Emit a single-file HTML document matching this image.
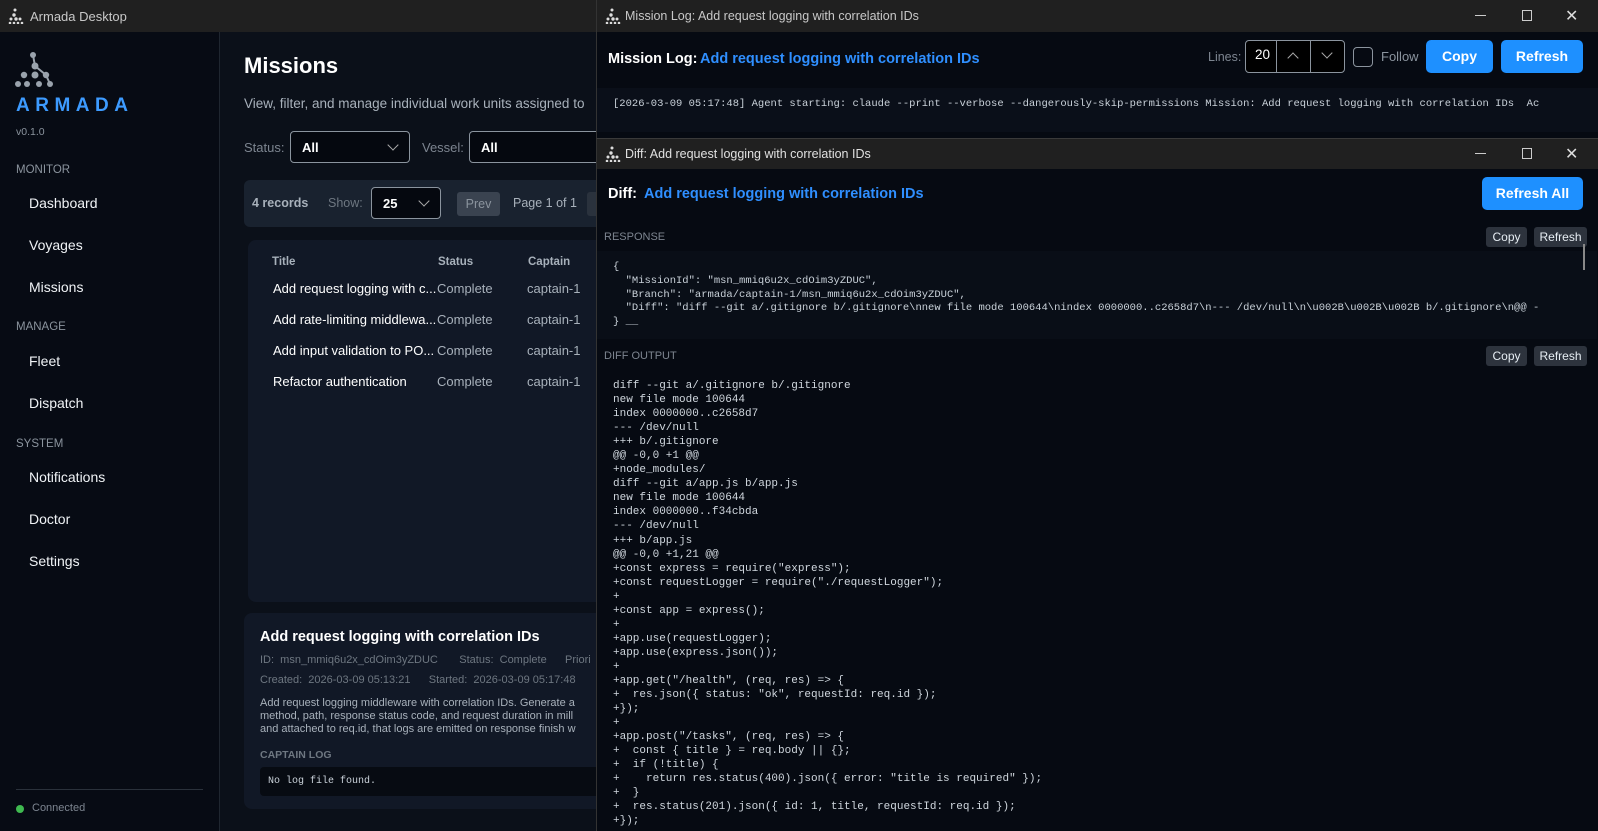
<!DOCTYPE html>
<html><head><meta charset="utf-8"><style>
*{box-sizing:border-box;margin:0;padding:0}
body{width:1598px;height:831px;overflow:hidden;background:#0b1019;font-family:"Liberation Sans",sans-serif;position:relative;color:#e6edf3}
.a{position:absolute;white-space:nowrap}
pre.a{white-space:pre}
.mono{font-family:"Liberation Mono",monospace}
.tb{position:absolute;background:#202020;height:32px;color:#c8c8c8;font-size:13px}
.sel{position:absolute;border:1px solid #8b949e;border-radius:4px;background:#05080f;color:#fff;font-size:13px;font-weight:bold}
.chev{position:absolute;width:8px;height:8px;border-right:1.3px solid #aaa;border-bottom:1.3px solid #aaa;transform:rotate(45deg)}
.nav{position:absolute;left:29px;font-size:14px;color:#f0f3f6}
.sec{position:absolute;left:16px;font-size:11.5px;color:#8b949e}
.btn{position:absolute;background:#1e90ff;color:#fff;font-weight:bold;font-size:14px;border-radius:5px;text-align:center}
.sb{position:absolute;background:#2d333d;color:#e6edf3;font-size:12px;border-radius:3px;text-align:center;line-height:20px}
.wc{position:absolute;color:#ddd;font-size:14px}
.c{position:absolute;font-size:13px;color:#a8b1bb}
</style></head><body>
<div class="tb" style="left:0;top:0;width:600px">
<svg class="a" style="left:8px;top:8px" width="16" height="16" viewBox="0 0 16 16" fill="#ddd"><circle cx="7" cy="2" r="1.5"/><circle cx="6" cy="7" r="1.7"/><circle cx="3" cy="11" r="1.5"/><circle cx="8" cy="11" r="1.7"/><circle cx="12" cy="11" r="1.5"/><circle cx="2" cy="15" r="1.3"/><circle cx="6" cy="15" r="1.3"/><circle cx="10" cy="15" r="1.3"/><circle cx="14" cy="15" r="1.3"/></svg>
<div class="a" style="left:30px;top:9px">Armada Desktop</div></div>
<div class="a" style="left:0;top:32px;width:220px;height:799px;background:#070b14;border-right:1px solid #1f2630"></div>
<svg class="a" style="left:15px;top:52px" width="38" height="36" viewBox="0 0 38 36" fill="#9aa3ad"><circle cx="18" cy="3" r="3"/><circle cx="20" cy="14" r="3.5"/><circle cx="9" cy="23" r="3.2"/><circle cx="20" cy="23" r="3.5"/><circle cx="31" cy="23" r="3.2"/><circle cx="3" cy="32" r="3"/><circle cx="12" cy="32" r="3"/><circle cx="24" cy="32" r="3"/><circle cx="35" cy="32" r="3"/><path d="M18 3 L20 14 M20 14 L31 23 L35 32" stroke="#9aa3ad" stroke-width="2" fill="none"/></svg>
<div class="a" style="left:16px;top:95px;font-size:19px;font-weight:bold;color:#3d9bff;letter-spacing:5.5px">ARMADA</div>
<div class="a" style="left:16px;top:126px;font-size:10.5px;color:#8b949e">v0.1.0</div>
<div class="sec" style="top:164px">MONITOR</div>
<div class="nav" style="top:195px">Dashboard</div>
<div class="nav" style="top:237px">Voyages</div>
<div class="nav" style="top:279px">Missions</div>
<div class="sec" style="top:321px">MANAGE</div>
<div class="nav" style="top:353px">Fleet</div>
<div class="nav" style="top:395px">Dispatch</div>
<div class="sec" style="top:438px">SYSTEM</div>
<div class="nav" style="top:469px">Notifications</div>
<div class="nav" style="top:511px">Doctor</div>
<div class="nav" style="top:553px">Settings</div>
<div class="a" style="left:16px;top:789px;width:187px;height:1px;background:#2a313b"></div>
<div class="a" style="left:16px;top:805px;width:8px;height:8px;border-radius:50%;background:#3fb950"></div>
<div class="a" style="left:32px;top:802px;font-size:11px;color:#7d8590">Connected</div>
<div class="a" style="left:244px;top:53px;font-size:22px;font-weight:bold;color:#fff">Missions</div>
<div class="a" style="left:244px;top:96px;font-size:13.5px;color:#a8b1bb">View, filter, and manage individual work units assigned to</div>
<div class="a" style="left:244px;top:140px;font-size:13px;color:#7d8590">Status:</div>
<div class="sel" style="left:290px;top:131px;width:120px;height:32px"><span class="a" style="left:11px;top:8px">All</span><div class="chev" style="left:98px;top:9px"></div></div>
<div class="a" style="left:422px;top:140px;font-size:13px;color:#7d8590">Vessel:</div>
<div class="sel" style="left:469px;top:131px;width:140px;height:32px"><span class="a" style="left:11px;top:8px">All</span></div>
<div class="a" style="left:244px;top:180px;width:360px;height:47px;background:#19222f;border-radius:6px"></div>
<div class="a" style="left:252px;top:196px;font-size:12.5px;font-weight:bold;color:#a8b1bb">4 records</div>
<div class="a" style="left:328px;top:196px;font-size:12.5px;color:#6e7781">Show:</div>
<div class="sel" style="left:371px;top:187px;width:70px;height:32px"><span class="a" style="left:11px;top:8px">25</span><div class="chev" style="left:48px;top:9px"></div></div>
<div class="a" style="left:457px;top:192px;width:43px;height:24px;background:#3a4350;border-radius:3px;color:#8b949e;font-size:12.5px;text-align:center;line-height:24px">Prev</div>
<div class="a" style="left:513px;top:196px;font-size:12.5px;color:#a8b1bb">Page 1 of 1</div>
<div class="a" style="left:587px;top:192px;width:20px;height:24px;background:#2a323d;border-radius:3px"></div>
<div class="a" style="left:248px;top:240px;width:360px;height:362px;background:#111826;border-radius:8px"></div>
<div class="a" style="left:272px;top:256px;font-size:11.5px;font-weight:bold;color:#a8b1bb">Title</div>
<div class="a" style="left:438px;top:256px;font-size:11.5px;font-weight:bold;color:#a8b1bb">Status</div>
<div class="a" style="left:528px;top:256px;font-size:11.5px;font-weight:bold;color:#a8b1bb">Captain</div>
<div class="a" style="left:273px;top:281px;font-size:13px;color:#fff">Add request logging with c...</div>
<div class="a" style="left:273px;top:312px;font-size:13px;color:#fff">Add rate-limiting middlewa...</div>
<div class="a" style="left:273px;top:343px;font-size:13px;color:#fff">Add input validation to PO...</div>
<div class="a" style="left:273px;top:374px;font-size:13px;color:#fff">Refactor authentication</div>
<div class="c" style="left:437px;top:281px">Complete</div><div class="c" style="left:437px;top:312px">Complete</div><div class="c" style="left:437px;top:343px">Complete</div><div class="c" style="left:437px;top:374px">Complete</div>
<div class="c" style="left:527px;top:281px">captain-1</div><div class="c" style="left:527px;top:312px">captain-1</div><div class="c" style="left:527px;top:343px">captain-1</div><div class="c" style="left:527px;top:374px">captain-1</div>
<div class="a" style="left:244px;top:613px;width:360px;height:196px;background:#111826;border-radius:8px"></div>
<div class="a" style="left:260px;top:629px;font-size:14.5px;font-weight:bold;color:#fff">Add request logging with correlation IDs</div>
<div class="a" style="left:260px;top:654px;font-size:11px;color:#6e7781">ID:&nbsp; msn_mmiq6u2x_cdOim3yZDUC&nbsp;&nbsp;&nbsp;&nbsp;&nbsp;&nbsp; Status:&nbsp; Complete&nbsp;&nbsp;&nbsp;&nbsp;&nbsp; Priori</div>
<div class="a" style="left:260px;top:674px;font-size:11px;color:#6e7781">Created:&nbsp; 2026-03-09 05:13:21&nbsp;&nbsp;&nbsp;&nbsp;&nbsp; Started:&nbsp; 2026-03-09 05:17:48</div>
<div class="a" style="left:260px;top:697px;font-size:11px;color:#a8b1bb;line-height:13px">Add request logging middleware with correlation IDs. Generate a<br>method, path, response status code, and request duration in mill<br>and attached to req.id, that logs are emitted on response finish w</div>
<div class="a" style="left:260px;top:749px;font-size:10.5px;font-weight:bold;color:#6e7781">CAPTAIN LOG</div>
<div class="a mono" style="left:260px;top:767px;width:344px;height:29px;background:#070b12;border-radius:4px;font-size:10px;color:#c9d1d9;padding:9px 0 0 8px">No log file found.</div>
<div class="a" style="left:596px;top:0;width:1002px;height:140px;background:#060a12;border-left:1px solid #333;overflow:hidden">
<div class="a" style="left:0;top:88px;width:1002px;height:44px;background:#0a0f19"></div>
<div class="a mono" style="left:16px;top:98px;font-size:10.5px;color:#c9d1d9">[2026-03-09 05:17:48] Agent starting: claude --print --verbose --dangerously-skip-permissions Mission: Add request logging with correlation IDs&nbsp; Ac</div>
</div>
<div class="tb" style="left:597px;top:0;width:1001px">
<svg class="a" style="left:8px;top:8px" width="16" height="16" viewBox="0 0 16 16" fill="#ddd"><circle cx="7" cy="2" r="1.5"/><circle cx="6" cy="7" r="1.7"/><circle cx="3" cy="11" r="1.5"/><circle cx="8" cy="11" r="1.7"/><circle cx="12" cy="11" r="1.5"/><circle cx="2" cy="15" r="1.3"/><circle cx="6" cy="15" r="1.3"/><circle cx="10" cy="15" r="1.3"/><circle cx="14" cy="15" r="1.3"/></svg>
<div class="a" style="left:28px;top:9px;font-size:12.5px">Mission Log: Add request logging with correlation IDs</div>
<div class="a" style="left:878px;top:15px;width:11px;height:1px;background:#ccc"></div>
<div class="a" style="left:925px;top:10px;width:10px;height:11px;border:1px solid #ccc"></div>
<div class="wc" style="left:968px;top:6px;font-size:16px">✕</div></div>
<div class="a" style="left:608px;top:51px;font-size:14.5px;font-weight:bold;color:#fff">Mission Log:</div>
<div class="a" style="left:700px;top:51px;font-size:14.5px;font-weight:bold;color:#2f8fff">Add request logging with correlation IDs</div>
<div class="a" style="left:1208px;top:50px;font-size:12.5px;color:#7d8590">Lines:</div>
<div class="a" style="left:1245px;top:40px;width:100px;height:33px;border:1px solid #8b949e;border-radius:4px;background:#000"></div>
<div class="a" style="left:1276px;top:41px;width:1px;height:31px;background:#8b949e"></div>
<div class="a" style="left:1310px;top:41px;width:1px;height:31px;background:#8b949e"></div>
<div class="a" style="left:1255px;top:47px;font-size:13.5px;color:#fff">20</div>
<div class="chev" style="left:1289px;top:54px;transform:rotate(-135deg)"></div>
<div class="chev" style="left:1323px;top:49px"></div>
<div class="a" style="left:1353px;top:47px;width:20px;height:20px;border:1px solid #8b949e;border-radius:4px"></div>
<div class="a" style="left:1381px;top:49px;font-size:13px;color:#8b949e">Follow</div>
<div class="btn" style="left:1426px;top:40px;width:67px;height:33px;line-height:33px">Copy</div>
<div class="btn" style="left:1501px;top:40px;width:82px;height:33px;line-height:33px">Refresh</div>
<div class="a" style="left:596px;top:138px;width:1002px;height:693px;background:#060a12;border-left:1px solid #333;border-top:1px solid #3a3a3a;overflow:hidden">
<div class="a" style="left:0;top:112px;width:1000px;height:88px;background:#090e17"></div>
<pre class="a mono" style="left:16px;top:122px;font-size:10.5px;line-height:13.8px;color:#c9d1d9">{
  "MissionId": "msn_mmiq6u2x_cdOim3yZDUC",
  "Branch": "armada/captain-1/msn_mmiq6u2x_cdOim3yZDUC",
  "Diff": "diff --git a/.gitignore b/.gitignore\nnew file mode 100644\nindex 0000000..c2658d7\n--- /dev/null\n\u002B\u002B\u002B b/.gitignore\n@@ -
} __</pre>
<pre class="a mono" style="left:16px;top:240px;font-size:11px;line-height:14.05px;color:#d0d7de">diff --git a/.gitignore b/.gitignore
new file mode 100644
index 0000000..c2658d7
--- /dev/null
+++ b/.gitignore
@@ -0,0 +1 @@
+node_modules/
diff --git a/app.js b/app.js
new file mode 100644
index 0000000..f34cbda
--- /dev/null
+++ b/app.js
@@ -0,0 +1,21 @@
+const express = require("express");
+const requestLogger = require("./requestLogger");
+
+const app = express();
+
+app.use(requestLogger);
+app.use(express.json());
+
+app.get("/health", (req, res) => {
+  res.json({ status: "ok", requestId: req.id });
+});
+
+app.post("/tasks", (req, res) => {
+  const { title } = req.body || {};
+  if (!title) {
+    return res.status(400).json({ error: "title is required" });
+  }
+  res.status(201).json({ id: 1, title, requestId: req.id });
+});</pre>
</div>
<div class="tb" style="left:597px;top:139px;width:1001px;height:30px">
<svg class="a" style="left:8px;top:7px" width="16" height="16" viewBox="0 0 16 16" fill="#ddd"><circle cx="7" cy="2" r="1.5"/><circle cx="6" cy="7" r="1.7"/><circle cx="3" cy="11" r="1.5"/><circle cx="8" cy="11" r="1.7"/><circle cx="12" cy="11" r="1.5"/><circle cx="2" cy="15" r="1.3"/><circle cx="6" cy="15" r="1.3"/><circle cx="10" cy="15" r="1.3"/><circle cx="14" cy="15" r="1.3"/></svg>
<div class="a" style="left:28px;top:8px;font-size:12.5px;color:#e0e0e0">Diff: Add request logging with correlation IDs</div>
<div class="a" style="left:878px;top:14px;width:11px;height:1px;background:#ccc"></div>
<div class="a" style="left:925px;top:9px;width:10px;height:11px;border:1px solid #ccc"></div>
<div class="wc" style="left:968px;top:5px;font-size:16px">✕</div></div>
<div class="a" style="left:608px;top:186px;font-size:14.5px;font-weight:bold;color:#fff">Diff:</div>
<div class="a" style="left:644px;top:186px;font-size:14.5px;font-weight:bold;color:#2f8fff">Add request logging with correlation IDs</div>
<div class="btn" style="left:1482px;top:177px;width:101px;height:33px;line-height:33px">Refresh All</div>
<div class="a" style="left:604px;top:231px;font-size:11px;color:#7d8590">RESPONSE</div>
<div class="sb" style="left:1486px;top:227px;width:41px">Copy</div>
<div class="sb" style="left:1534px;top:227px;width:53px">Refresh</div>
<div class="a" style="left:1583px;top:244px;width:2px;height:26px;background:#888"></div>
<div class="a" style="left:604px;top:350px;font-size:11px;color:#7d8590">DIFF OUTPUT</div>
<div class="sb" style="left:1486px;top:346px;width:41px">Copy</div>
<div class="sb" style="left:1534px;top:346px;width:53px">Refresh</div>
</body></html>
